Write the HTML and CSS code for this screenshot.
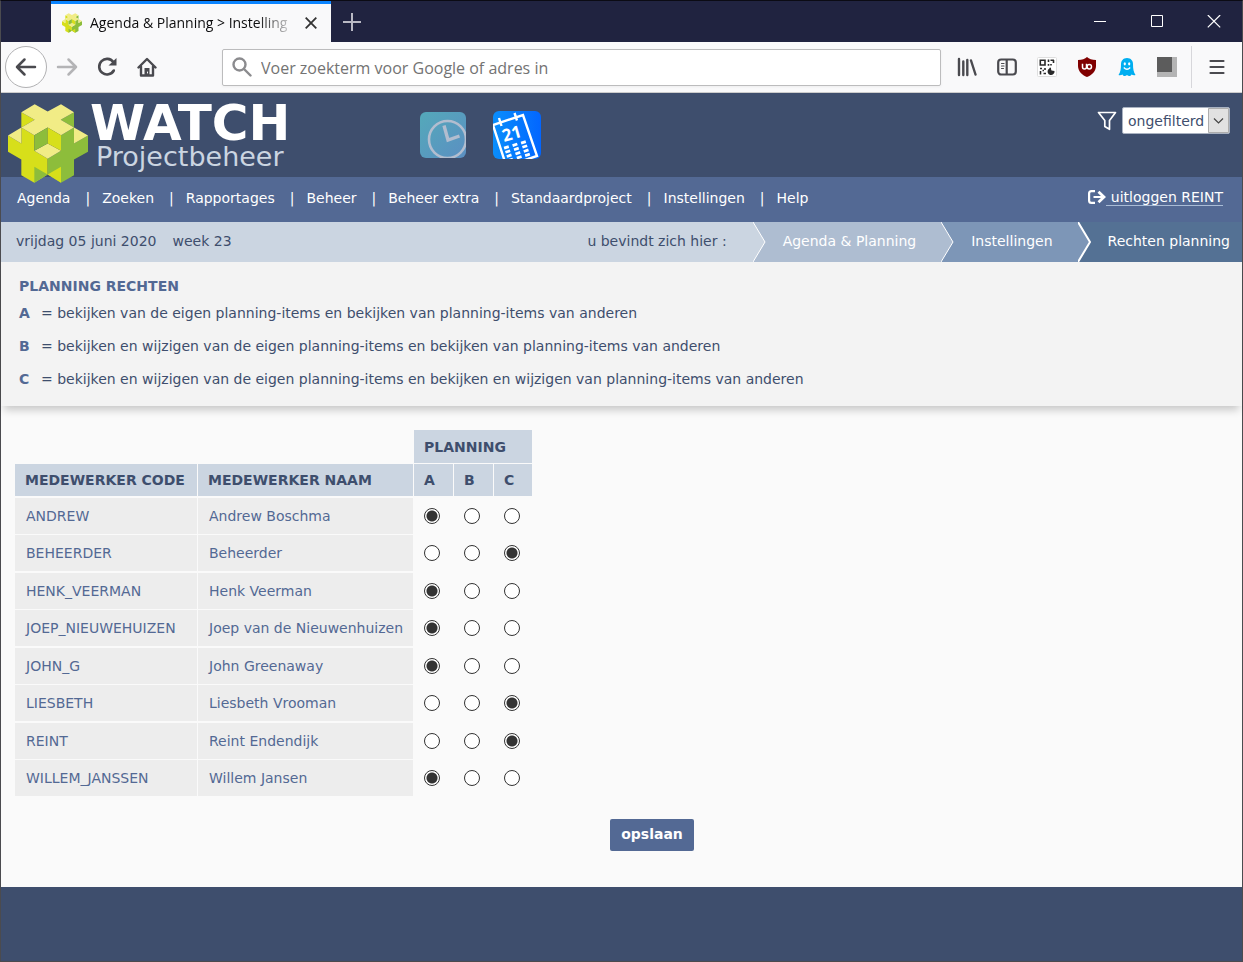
FILE: index.html
```html
<!DOCTYPE html>
<html lang="nl">
<head>
<meta charset="utf-8">
<title>Agenda &amp; Planning &gt; Instellingen</title>
<link rel="stylesheet" href="styles.css">
</head>
<body>
<svg class="defs" aria-hidden="true">
  <symbol id="cube" viewBox="24 42 240 236">
    <path fill="#d7df1a" d="M64 66 104 89 64 112zM24 136 64 160V112L103 135V182L143 206V253L103 278 64 255V208L24 185z"/>
    <path fill="#8dbd3b" d="M222 66 182 89 222 112zM264 136 222 160V112L183 135V182L143 206V253L183 278 222 255V208L264 185z"/>
    <path fill="#f1ec86" d="M64 66 104 42 143 64 183 42 222 66 182 89 222 112 183 135 143 112 103 135 64 112 104 89zM24 136 64 112V160zM222 112 264 136 222 160zM103 182 143 160 183 182 143 206z"/>
    <path fill="#8dbd3b" d="M103 135 143 112V160L103 182zM103 230 143 253 103 278z"/>
    <path fill="#d7df1a" d="M143 112 183 135V182L143 160zM183 230 143 253 183 278z"/>
  </symbol>
</svg>
<div class="window">
  <header class="titlebar">
    <div class="tab">
      <svg class="favicon" width="20" height="20"><use href="#cube"/></svg>
      <span class="tab-title">Agenda &amp; Planning &gt; Instelling</span>
      <button class="plain" aria-label="Tabblad sluiten"><svg width="12" height="12" viewBox="0 0 12 12" stroke="#333" stroke-width="1.8" fill="none"><path d="M.7.7 11.3 11.3M11.3.7.7 11.3"/></svg></button>
    </div>
    <button class="plain new-tab" aria-label="Nieuw tabblad"><svg width="18" height="18" viewBox="0 0 18 18" stroke="#b9b9c4" stroke-width="2" fill="none"><path d="M9 0V18M0 9H18"/></svg></button>
    <div class="controls">
      <button class="plain" aria-label="Minimaliseren"><svg width="14" height="14" viewBox="0 0 14 14" stroke="#fff" fill="none"><path d="M1 6.500H13"/></svg></button>
      <button class="plain" aria-label="Maximaliseren"><svg width="14" height="14" viewBox="0 0 14 14" stroke="#fff" fill="none"><path d="M1.500.500H12.500V11.500H1.500z"/></svg></button>
      <button class="plain" aria-label="Sluiten"><svg width="14" height="14" viewBox="0 0 14 14" stroke="#fff" stroke-width="1.200" fill="none"><path d="M.8 0 13.200 12.400M13.200 0 .8 12.400"/></svg></button>
    </div>
  </header>

  <div class="toolbar">
    <button class="plain back" aria-label="Terug"><svg width="22" height="20" viewBox="0 0 22 20" stroke="#4a4a4f" stroke-width="2.500" fill="none" stroke-linecap="round" stroke-linejoin="round"><path d="M20 10H2M9.500 2.500 2 10 9.500 17.500"/></svg></button>
    <button class="plain" aria-label="Vooruit"><svg width="22" height="20" viewBox="0 0 22 20" stroke="#b4b4b6" stroke-width="2.500" fill="none" stroke-linecap="round" stroke-linejoin="round"><path d="M2 10H20M12.500 2.500 20 10 12.500 17.500"/></svg></button>
    <button class="plain" aria-label="Vernieuwen"><svg width="20" height="20" viewBox="0 0 20 20" fill="none" stroke="#4a4a4f" stroke-width="2.600" stroke-linecap="round"><path d="M16.800 13.500A7.800 7.800 0 1 1 16.300 5"/><path fill="#4a4a4f" stroke="none" d="M19.500 1V8.500H11.500z"/></svg></button>
    <button class="plain" aria-label="Startpagina"><svg width="20" height="20" viewBox="0 0 20 20" fill="none" stroke="#4a4a4f" stroke-width="2.400" stroke-linecap="round" stroke-linejoin="round"><path d="M1.500 10.500 10 2 18.500 10.500M4 9.500V18.500H16V9.500"/><path fill="#4a4a4f" stroke="none" d="M7.500 11H12.500V19H7.500z"/><path stroke="#f9f9fa" stroke-width="1" d="M10.500 15V16"/></svg></button>
    <label class="address">
      <svg width="20" height="20" viewBox="0 0 20 20" fill="none" stroke="#8b8b8e" stroke-width="2.400" stroke-linecap="round"><circle cx="7.500" cy="7.500" r="6"/><path d="M12 12 18.500 18.500"/></svg>
      <input type="text" aria-label="Adres" placeholder="Voer zoekterm voor Google of adres in">
    </label>
    <div class="extensions">
      <button class="plain" aria-label="Bibliotheek"><svg width="20" height="20" viewBox="0 0 20 20" stroke="#4a4a4f" stroke-width="2.400" stroke-linecap="round"><path d="M2 2V18M6.300 4.500V18M10.300 3V18M14 3.500 18.500 17.500"/></svg></button>
      <button class="plain" aria-label="Zijbalk"><svg width="20" height="20" viewBox="0 0 20 20" fill="none" stroke="#4a4a4f" stroke-width="2.200" stroke-linecap="round"><rect x="1.200" y="2.500" width="17.600" height="15" rx="3"/><path d="M9.700 3V17"/><path stroke-width="1.200" d="M4.500 6.500H7M4.500 9H7M4.500 11.500H6.500"/></svg></button>
      <button class="plain" aria-label="QR-code"><svg width="20" height="20" viewBox="0 0 20 20"><rect x=".5" y=".5" width="19" height="19" rx="1" fill="#fff" stroke="#dedede"/><g fill="none" stroke="#2a2a2a" stroke-width="1.600"><path d="M3.300 3.300H8V8H3.300zM11.500 2.500V5M13.500 3.300H17M16.500 3V6M11.500 7V8.800M14 7V8.500M3 11.500H5M8 11V13M5.500 13.500H7M3.500 14V17.500M6.500 16.500H9M12.500 11.500H14"/></g><path fill="#2a2a2a" d="M13.500 10.800 14.500 13.500 17.500 14A3.500 3.500 0 1 1 11.200 12.500z"/></svg></button>
      <button class="plain" aria-label="uBlock"><svg width="20" height="20" viewBox="0 0 20 20"><path fill="#800000" d="M10 0C12 2 15 3 19 3V9C19 14 15 18 10 20 5 18 1 14 1 9V3C5 3 8 2 10 0z"/><g fill="none" stroke="#fff" stroke-width="1.500"><path d="M5.500 6.800V10A2 2 0 0 0 9.500 10V6.800"/><circle cx="12.300" cy="9.700" r="2.200"/></g></svg></button>
      <button class="plain" aria-label="Ghostery"><svg width="20" height="20" viewBox="0 0 20 20"><path fill="#00aef0" d="M10 1C14 1 16 4 16 7 16 12 16.500 15 18.500 18 17 18.500 15.500 18 14.500 17.500 13.500 19.500 11.500 19.500 10 18 8.500 19.500 6.500 19.500 5.500 17.500 4.500 18 3 18.500 1.500 18 3.500 15 4 12 4 7 4 4 6 1 10 1z"/><ellipse cx="7.800" cy="6.800" rx="1.100" ry="1.600" fill="#fff"/><ellipse cx="12.200" cy="6.800" rx="1.100" ry="1.600" fill="#fff"/><path d="M6.800 10.500Q10 14 13.200 10.500" fill="none" stroke="#fff" stroke-width="1.300"/></svg></button>
      <button class="plain" aria-label="Extensie"><svg width="20" height="20" viewBox="0 0 20 20"><path fill="#b4b4b4" d="M0 0H20V20H0z"/><path fill="#5c5c5c" d="M0 0H15V15H0z"/></svg></button>
    </div>
    <button class="plain menu" aria-label="Menu"><svg width="16" height="16" viewBox="0 0 16 16" stroke="#4a4a4f" stroke-width="2.200" stroke-linecap="round"><path d="M1.500 2H14.500M1.500 8H14.500M1.500 14H14.500"/></svg></button>
  </div>

  <div class="banner">
    <a class="brand" href="#" aria-label="WATCH Projectbeheer">
      <svg class="logo" width="80" height="79"><use href="#cube"/></svg>
      <span class="brand-text"><span class="brand-name">WATCH</span><span class="brand-sub">Projectbeheer</span></span>
    </a>
    <div class="apps">
      <a href="#" aria-label="Uren"><svg width="46" height="46" viewBox="0 0 46 46"><defs><linearGradient id="teal" x2="1" y2="1"><stop stop-color="#54a9ba"/><stop offset="1" stop-color="#5b8fc2"/></linearGradient><clipPath id="r1"><rect width="46" height="46" rx="6"/></clipPath></defs><g clip-path="url(#r1)"><path fill="url(#teal)" d="M0 0H46V46H0z"/><g fill="none" stroke="#b2bdcf"><circle cx="27.500" cy="27.500" r="18.500" stroke-width="2.600"/><path stroke-width="3.400" d="M24 13.500 28 28 39.500 24"/></g></g></svg></a>
      <a href="#" aria-label="Agenda"><svg width="50" height="50" viewBox="0 0 50 50"><defs><linearGradient id="blue" x2="1" y2="0"><stop stop-color="#0a8ffc"/><stop offset="1" stop-color="#0265ff"/></linearGradient><clipPath id="r2"><rect x="1" y="1" width="48" height="48" rx="6"/></clipPath></defs><g clip-path="url(#r2)"><path fill="url(#blue)" d="M0 0H50V50H0z"/><g fill="none" stroke="#fff"><path stroke-width="2.400" d="M1 15 31 5 45 46 30 51M1 15 13 52M7 8 9.500 16M22.500 3 25 10.500"/><path stroke-width="5" stroke-dasharray="2.800 1.600" d="M14 36 19.500 53M22.500 33.500 28.500 51M31 31 36.500 48"/></g><text class="day" x="12" y="32" transform="rotate(-16 12 32)">21</text></g></svg></a>
    </div>
    <div class="filter">
      <svg width="20" height="20" viewBox="0 0 20 20" fill="none" stroke="#fff" stroke-width="1.700" stroke-linejoin="round"><path d="M1.500 1.500H18.500L12.500 9.500V18.300L7.800 15.500V9.500z"/></svg>
      <div class="select">
        <select aria-label="Filter"><option>ongefilterd</option></select>
        <svg class="arrow" width="21" height="25" viewBox="0 0 21 25"><path fill="#e1e1e1" stroke="#adadad" d="M.5.5H20.500V24.500H.5z"/><path fill="none" stroke="#444" stroke-width="1.200" d="M6 10.500 10.500 15 15 10.500"/></svg>
      </div>
    </div>
  </div>

  <nav class="nav">
    <ul>
      <li><a href="#">Agenda</a></li><li><a href="#">Zoeken</a></li><li><a href="#">Rapportages</a></li><li><a href="#">Beheer</a></li><li><a href="#">Beheer extra</a></li><li><a href="#">Standaardproject</a></li><li><a href="#">Instellingen</a></li><li><a href="#">Help</a></li>
    </ul>
    <a class="logout" href="#"><svg width="18" height="14" viewBox="0 0 18 14" fill="none" stroke="#fff" stroke-width="2.200"><path d="M7 1.100H3.500Q1.100 1.100 1.100 3.500V10.500Q1.100 12.900 3.500 12.900H7M5.500 7H15"/><path stroke-width="2.800" d="M10.500 1.800 16 7 10.500 12.200"/></svg><span>uitloggen REINT</span></a>
  </nav>

  <div class="trail">
    <span class="date">vrijdag 05 juni 2020</span><span class="week">week 23</span>
    <span class="here">u bevindt zich hier :</span>
    <svg class="chevron c1" width="13" height="40" viewBox="0 0 13 40"><path d="M0 0 12 20 0 40z"/><path class="edge" d="M0 0 12 20 0 40"/></svg>
    <a class="crumb c1" href="#">Agenda &amp; Planning</a>
    <svg class="chevron c2" width="13" height="40" viewBox="0 0 13 40"><path d="M0 0 12 20 0 40z"/><path class="edge" d="M0 0 12 20 0 40"/></svg>
    <a class="crumb c2" href="#">Instellingen</a>
    <svg class="chevron c3" width="13" height="40" viewBox="0 0 13 40"><path d="M0 0 12 20 0 40z"/><path class="edge" d="M0 0 12 20 0 40"/></svg>
    <span class="crumb c3">Rechten planning</span>
  </div>

  <section class="info">
    <h1>PLANNING RECHTEN</h1>
    <dl>
      <div><dt>A</dt><dd>= bekijken van de eigen planning-items en bekijken van planning-items van anderen</dd></div>
      <div><dt>B</dt><dd>= bekijken en wijzigen van de eigen planning-items en bekijken van planning-items van anderen</dd></div>
      <div><dt>C</dt><dd>= bekijken en wijzigen van de eigen planning-items en bekijken en wijzigen van planning-items van anderen</dd></div>
    </dl>
  </section>

  <main class="content">
    <form>
      <table>
        <thead>
          <tr><td colspan="2"></td><th colspan="3">PLANNING</th></tr>
          <tr><th class="code">MEDEWERKER CODE</th><th class="name">MEDEWERKER NAAM</th><th class="opt">A</th><th class="opt">B</th><th class="opt last">C</th></tr>
        </thead>
        <tbody>
          <tr><td>ANDREW</td><td>Andrew Boschma</td><td><input type="radio" name="r1" aria-label="Andrew A" checked></td><td><input type="radio" name="r1" aria-label="Andrew B"></td><td><input type="radio" name="r1" aria-label="Andrew C"></td></tr>
          <tr><td>BEHEERDER</td><td>Beheerder</td><td><input type="radio" name="r2" aria-label="Beheerder A"></td><td><input type="radio" name="r2" aria-label="Beheerder B"></td><td><input type="radio" name="r2" aria-label="Beheerder C" checked></td></tr>
          <tr><td>HENK_VEERMAN</td><td>Henk Veerman</td><td><input type="radio" name="r3" aria-label="Henk A" checked></td><td><input type="radio" name="r3" aria-label="Henk B"></td><td><input type="radio" name="r3" aria-label="Henk C"></td></tr>
          <tr><td>JOEP_NIEUWEHUIZEN</td><td>Joep van de Nieuwenhuizen</td><td><input type="radio" name="r4" aria-label="Joep A" checked></td><td><input type="radio" name="r4" aria-label="Joep B"></td><td><input type="radio" name="r4" aria-label="Joep C"></td></tr>
          <tr><td>JOHN_G</td><td>John Greenaway</td><td><input type="radio" name="r5" aria-label="John A" checked></td><td><input type="radio" name="r5" aria-label="John B"></td><td><input type="radio" name="r5" aria-label="John C"></td></tr>
          <tr><td>LIESBETH</td><td>Liesbeth Vrooman</td><td><input type="radio" name="r6" aria-label="Liesbeth A"></td><td><input type="radio" name="r6" aria-label="Liesbeth B"></td><td><input type="radio" name="r6" aria-label="Liesbeth C" checked></td></tr>
          <tr><td>REINT</td><td>Reint Endendijk</td><td><input type="radio" name="r7" aria-label="Reint A"></td><td><input type="radio" name="r7" aria-label="Reint B"></td><td><input type="radio" name="r7" aria-label="Reint C" checked></td></tr>
          <tr><td>WILLEM_JANSSEN</td><td>Willem Jansen</td><td><input type="radio" name="r8" aria-label="Willem A" checked></td><td><input type="radio" name="r8" aria-label="Willem B"></td><td><input type="radio" name="r8" aria-label="Willem C"></td></tr>
        </tbody>
      </table>
      <div class="actions"><button class="save" type="button">opslaan</button></div>
    </form>
  </main>
  <footer class="footer"></footer>
</div>
</body>
</html>
```

FILE: styles.css
```css
* { box-sizing: border-box; }
body { margin: 0; font: 14px/20px Verdana, "DejaVu Sans", sans-serif; color: #3e4e6d; }
.defs { position: absolute; width: 0; height: 0; }
svg { display: block; flex: none; }
a { color: inherit; text-decoration: none; }
.window { display: flex; flex-direction: column; min-height: 100vh; border: 1px solid #4b4b4f; border-top-color: #0b0b14; background: #fafafa; }
.plain { display: flex; align-items: center; justify-content: center; padding: 0; border: 0; background: none; }

.titlebar { display: flex; height: 41px; padding-left: 50px; background: #202340; }
.tab { display: flex; align-items: center; width: 280px; padding: 0 14px 0 11px; background: #f9f9fa; border-top: 3px solid #0a84ff; font: 14px/20px "Open Sans", sans-serif; color: #0c0c0d; }
.tab-title { flex: 1; min-width: 0; margin: 0 8px; overflow: hidden; white-space: nowrap; mask-image: linear-gradient(to left, transparent, #000 40px); }
.new-tab { width: 42px; }
.controls { display: flex; margin-left: auto; }
.controls .plain { width: 57px; }

.toolbar { display: flex; align-items: center; height: 51px; padding-left: 4px; background: #f9f9fa; border-bottom: 1px solid #ccc; }
.toolbar > .plain { width: 40px; height: 42px; }
.toolbar > .back { width: 42px; border: 1px solid #b1b1b3; border-radius: 50%; background: #fff; }
.address { display: flex; align-items: center; flex: 1; height: 37px; margin: 0 6px 0 55px; padding: 0 9px; border: 1px solid #bcbcbd; border-radius: 2px; background: #fff; box-shadow: 0 1px 3px #0000000d; }
.address input { flex: 1; min-width: 0; padding: 2px 0 0; margin-left: 9px; border: 0; outline: 0; background: none; font: 16px/24px "Open Sans", sans-serif; color: #737373; }
.address input::placeholder { color: #737373; opacity: 1; }
.extensions { display: flex; }
.extensions .plain { width: 40px; }
.toolbar > .menu { width: 51px; margin-left: 4px; border-left: 1px solid #d7d7db; }

.banner { display: flex; align-items: flex-start; height: 84px; padding: 0 12px 0 7px; background: #3e4e6d; color: #fff; }
.brand { display: flex; width: 282px; margin-top: 11px; }
.logo { position: relative; z-index: 1; }
.brand-text { display: flex; flex-direction: column; margin-left: 2px; }
.brand-name { font-size: 50px; line-height: 38px; font-weight: bold; }
.brand-sub { margin-left: 6px; font-size: 27px; line-height: 30px; color: #cbd5e1; }
.apps { display: flex; align-items: center; gap: 26px; margin: 17px 0 0 130px; }
.day { font: bold 17px "Open Sans", sans-serif; fill: #fff; }
.filter { display: flex; align-items: center; gap: 5px; margin: 14px 0 0 auto; }
.select { position: relative; }
select { appearance: none; height: 27px; width: 108px; padding: 0 22px 0 5px; border: 1px solid #a9b2c1; border-radius: 2px; background: #fff; color: #3e4e6d; font: 14px/20px Verdana, "DejaVu Sans", sans-serif; }
.arrow { position: absolute; top: 1px; right: 1px; pointer-events: none; }

.nav { display: flex; justify-content: space-between; height: 45px; padding: 11px 19px 0 16px; background: #536994; color: #fff; }
.nav ul { display: flex; margin: 0; padding: 0; list-style: none; }
.nav li + li::before { content: "|"; margin: 0 12px 0 15px; }
.logout { display: flex; align-items: center; height: 18px; }
.logout span { padding-left: 5px; border-bottom: 1px solid #a9bcd6; line-height: 16px; }

.trail { display: flex; height: 40px; padding-left: 15px; background: #cbd5e1; line-height: 38px; white-space: nowrap; }
.week { margin-left: 16px; }
.here { margin: 0 26px 0 auto; }
.crumb { padding: 0 25px 0 17px; color: #fff; }
.chevron { fill: #cbd5e1; }
.c1 { background: #aebdd1; }
.c2 { background: #7d96b7; }
.c3 { background: #547194; }
.chevron.c2 { fill: #aebdd1; }
.chevron.c3 { fill: #7d96b7; }
.crumb.c3 { padding-right: 12px; }
.edge { fill: none; stroke: #fff; stroke-width: 1; }
.c3 .edge { stroke-width: 2; }

.info { padding: 14px 18px 11px; background: #f3f3f3; box-shadow: 0 7px 8px -3px #00000033; }
.info h1 { margin: 0; font-size: 14px; line-height: 20px; color: #536994; }
.info dl { margin: 0; }
.info dl div { display: flex; height: 33px; padding-top: 7px; }
.info dt { width: 22px; font-weight: bold; color: #536994; }
.info dd { margin: 0; }

.content { padding: 23px 13px 36px; }
table { border-spacing: 1px; }
th, td { padding: 0 10px; text-align: left; white-space: nowrap; }
th { height: 32px; background: #cbd5e1; }
thead td { height: 33px; }
.code { width: 182px; }
.name { width: 215px; }
.opt { width: 39px; }
.last { width: 38px; }
tbody td { height: 36px; padding: 0 8px 0 11px; color: #536994; }
tbody tr:nth-child(odd) td { height: 37px; border-top: 1px solid #fafafa; }
tbody td:nth-child(-n+2) { background: #ededed; }
tbody td:nth-child(n+3) { padding: 0 10px; }
input[type="radio"] { appearance: none; display: block; width: 16px; height: 16px; margin: 0; border: 1px solid #333; border-radius: 50%; background: #fff; }
input[type="radio"]:checked { background: radial-gradient(circle, #333 5px, #fff 6px); }
.actions { display: flex; justify-content: center; margin-top: 22px; padding-left: 61px; }
.save { height: 32px; padding: 0 11px 2px; border: 0; border-radius: 2px; background: #536994; color: #fff; font: bold 14px/20px Verdana, "DejaVu Sans", sans-serif; }
.footer { flex: 1; min-height: 74px; background: #3e4e6d; }
```
